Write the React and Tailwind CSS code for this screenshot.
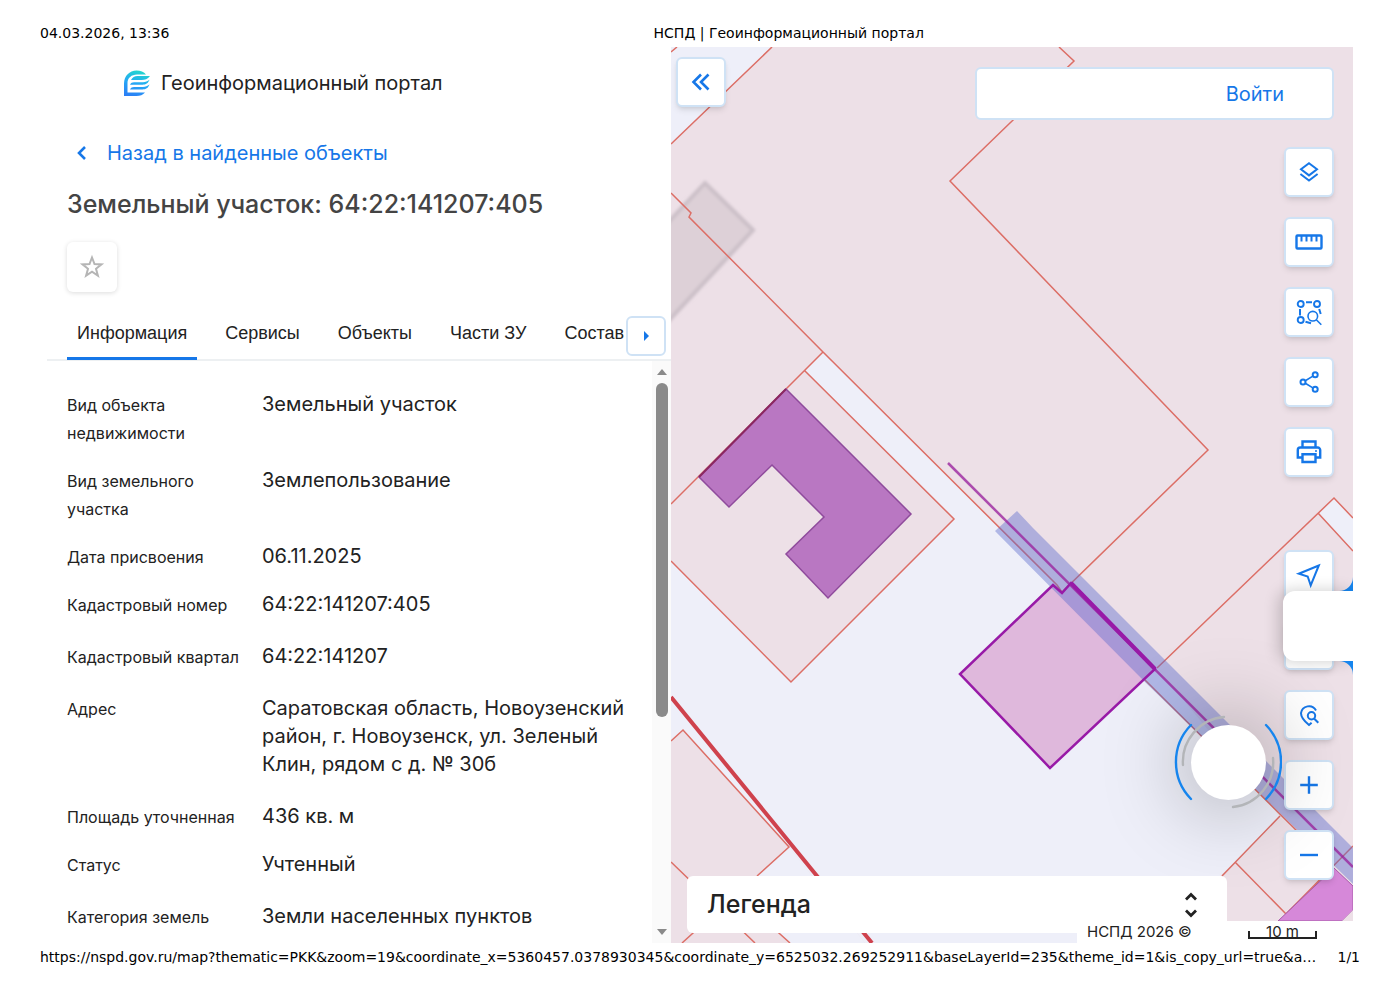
import React, { useState } from 'react';

const tabs = ['Информация', 'Сервисы', 'Объекты', 'Части ЗУ', 'Состав'];

const details = [
  { label: 'Вид объекта недвижимости', value: 'Земельный участок' },
  { label: 'Вид земельного участка', value: 'Землепользование' },
  { label: 'Дата присвоения', value: '06.11.2025' },
  { label: 'Кадастровый номер', value: '64:22:141207:405', wide: true },
  { label: 'Кадастровый квартал', value: '64:22:141207', wide: true },
  {
    label: 'Адрес',
    value: 'Саратовская область, Новоузенский район, г. Новоузенск, ул. Зеленый Клин, рядом с д. № 30б',
    wide: true,
  },
  { label: 'Площадь уточненная', value: '436 кв. м' },
  { label: 'Статус', value: 'Учтенный', wide: true },
  { label: 'Категория земель', value: 'Земли населенных пунктов' },
];

const Icon = ({ children, className = 'size-7' }) => (
  <svg
    className={className}
    viewBox="0 0 28 28"
    fill="none"
    stroke="currentColor"
    strokeWidth={2}
    aria-hidden="true"
  >
    {children}
  </svg>
);

const LayersIcon = () => (
  <Icon>
    <path d="M14 5.2 22 11.3 14 17.4 6 11.3Z" />
    <path d="M5.4 16 14 22.6 22.6 16" />
  </Icon>
);

const RulerIcon = () => (
  <Icon>
    <rect x="1.5" y="7.5" width="25" height="13" rx="1" strokeWidth={2.4} />
    <path d="M6.5 8v5.5M11.5 8v5.5M16.5 8v5.5M21.5 8v5.5" />
  </Icon>
);

const AreaSearchIcon = () => (
  <Icon>
    <circle cx="5.7" cy="6" r="3" strokeWidth={1.9} />
    <circle cx="22" cy="6" r="3" strokeWidth={1.9} />
    <circle cx="5.7" cy="22" r="3" strokeWidth={1.9} />
    <path d="M11 4.2h6M5 11v6.5M24.2 11l1.5 5M10.5 23.8l5.5 1.5" />
    <circle cx="17.8" cy="18.2" r="4.8" strokeWidth={1.6} />
    <path d="m21.3 21.8 5 5" strokeWidth={1.6} />
  </Icon>
);

const ShareIcon = () => (
  <Icon>
    <circle cx="8" cy="14" r="2.5" />
    <circle cx="20.2" cy="6.7" r="2.5" />
    <circle cx="20.2" cy="21.3" r="2.5" />
    <path d="m10.3 12.7 7.6-4.6M10.3 15.3l7.6 4.6" strokeWidth={1.6} />
  </Icon>
);

const PrintIcon = () => (
  <Icon>
    <path d="M7.5 9.5v-6h13v6" strokeWidth={2.4} />
    <path d="M7 19.5H2.8V12a2.5 2.5 0 0 1 2.5-2.5h17.4a2.5 2.5 0 0 1 2.5 2.5v7.5H21" strokeWidth={2.4} />
    <path d="M7.5 16.2h13V24h-13Z" strokeWidth={2.4} />
    <circle cx="21" cy="13" r="1" fill="currentColor" stroke="none" />
  </Icon>
);

const LocateIcon = () => (
  <Icon>
    <path d="M23.8 4.5 3.8 12.7l8.9 2.8 3 8.8Z" />
  </Icon>
);

const PlaceSearchIcon = () => (
  <Icon>
    <path d="M21 9.5A8 8 0 0 0 6 12.2c0 5 4 8.5 8 11.8l2.6-2.3" />
    <circle cx="16.5" cy="14.8" r="3.7" />
    <path d="m19.3 17.7 4 4" />
  </Icon>
);

const PlusIcon = () => (
  <Icon>
    <path d="M14 5.2v17.6M5.2 14h17.6" strokeWidth={2.4} />
  </Icon>
);

const MinusIcon = () => (
  <Icon>
    <path d="M5 14h18" strokeWidth={2.4} />
  </Icon>
);

const Logo = () => (
  <svg className="size-7" viewBox="0 0 28 28" fill="none" aria-hidden="true">
    <defs>
      <linearGradient id="logo" x1="16" y1="0" x2="8" y2="28" gradientUnits="userSpaceOnUse">
        <stop offset="0" stopColor="#22dcc8" />
        <stop offset="0.5" stopColor="#25a8f5" />
        <stop offset="1" stopColor="#2b7df5" />
      </linearGradient>
    </defs>
    <path
      fill="url(#logo)"
      d="M1 27V14.5C1 7 6.5 1.5 13.5 1.5c4 0 7.500 1.500 9.500 4H14C8.500 5.500 4.500 9 4.500 14v9.500H22C20 26 17 27 13.500 27Z"
    />
    <path
      fill="url(#logo)"
      d="M8 11c1.500-2.500 3.500-4 6.500-4h12.500C24.500 10 22 11 18.500 11ZM7 15.700c1-1.700 2-2.400 4-2.400h9c2.500 0 4.500-1 6.500-2.500-1.500 3.700-3.500 4.900-7 4.900ZM7 20.400c1-1.700 2-2.400 4-2.400h9c2.500 0 4.500-1 6.500-2.500-1.500 3.700-3.500 4.900-7 4.900Z"
    />
  </svg>
);

const MapButton = ({ label, children }) => (
  <button
    type="button"
    aria-label={label}
    className="flex size-[50px] items-center justify-center rounded-md border-2 border-[#cfe2f5] bg-white text-[#1677e8] shadow-md"
  >
    {children}
  </button>
);

const ParcelMap = () => (
  <svg
    className="absolute inset-0 h-full w-full"
    viewBox="671 47 682 896"
    preserveAspectRatio="xMidYMid slice"
    aria-hidden="true"
  >
    <defs>
      <filter id="soft" x="-10%" y="-10%" width="120%" height="120%">
        <feGaussianBlur stdDeviation="1.5" />
      </filter>
    </defs>
    <rect x="671" y="47" width="682" height="896" fill="#ede0e7" />

    {/* land between the parcels */}
    <g fill="#eeeff9">
      <path d="M671 47H772L671 144Z" />
      <path d="M823 352 1057 585 1157 668 1280 817 1200 896V943H865L671 697V561L791 682 954 519 805 371Z" />
      <path d="M1334 498 1353 518V551L1318 513Z" />
    </g>

    {/* building */}
    <path
      d="M660 231 705 183 753 230 660 330Z"
      fill="#ddd0d7"
      stroke="#cbbfc7"
      strokeWidth="4"
      filter="url(#soft)"
    />

    {/* lower left parcels */}
    <path d="M671 697 865 943H671Z" fill="#eeeff9" />
    <path d="M671 741 683 730 789 847 757 876 686 943H671Z" fill="#ede0e7" />
    <path d="M686 943 735 895 790 943Z" fill="#ede0e7" />

    <g fill="none" stroke="#dc6e66" strokeWidth="1.5">
      <path d="M671 52 677 47M772 47 671 144" />
      <path d="M671 193 691 213 689 217 823 352 1057 585 1062 592 1208 450 950 181 1074 61 1059 47" />
      <path d="M823 352 671 504M805 371 954 519 791 682 671 561" />
      <path d="M1157 668 1334 498 1353 518M1318 513 1353 551" />
      <path d="M671 741 683 730 789 847 757 876M671 862 755 943M735 895 682 943M770 925 790 943" />
      <path d="M1145 680 1298 832M1280 816 1222 876M1235 862 1286 914M1286 914 1353 846" />
    </g>
    <path d="M671 697 817 876 872 943" fill="none" stroke="#cf424d" strokeWidth="4" />

    {/* neighbouring buildings */}
    <path
      d="M786 389 911 514 828 598 786 554 824 517 772 465 729 507 699 477Z"
      fill="#b977c2"
      stroke="#8f4b9c"
      strokeWidth="1.5"
    />
    <path d="M699 477 786 389" stroke="#8b2860" strokeWidth="2" />
    <path d="M1278 921 1334 868 1353 886V910L1342 921Z" fill="#d688d9" stroke="#a85aa8" strokeWidth="1" />
    <path d="M1342 921 1353 910V921Z" fill="#ede0e7" />

    {/* selected parcel */}
    <path d="M1053 585 1062 593 1071 583 1155 669 1050 768 960 674Z" fill="#dfb8dc" />
    <path d="M995 531 1017 511 1033 528 1353 848V884L1145 682Z" fill="#5b69cd" fillOpacity="0.42" />
    <path d="M948 463 1353 867" stroke="#9b259f" strokeOpacity="0.8" strokeWidth="2.5" />
    <path
      d="M1053 585 1062 593 1071 583 1155 669 1050 768 960 674Z"
      fill="none"
      stroke="#981aa7"
      strokeWidth="2.5"
    />
    <path d="M1071 583 1155 669" stroke="#981aa7" strokeWidth="4" />
  </svg>
);

const Loader = () => (
  <div className="absolute right-[71px] bottom-[127px] flex size-[108px] items-center justify-center">
    <div className="size-[75px] rounded-full bg-white shadow-[0_0_80px_12px_rgba(0,0,0,0.26)]" />
    <svg className="absolute inset-0" viewBox="1174 708 108 108" fill="none" strokeLinecap="round" aria-hidden="true">
      <g stroke="#b3b5b8" strokeWidth="2.4">
        <path d="M1183 765A45 45 0 0 1 1224 717" />
        <path d="M1273 758A45 45 0 0 1 1233 807" />
      </g>
      <g stroke="#1685ee" strokeWidth="2.4">
        <path d="M1191 725A53 53 0 0 0 1191 799" />
        <path d="M1266 725A53 53 0 0 1 1266 799" />
      </g>
    </svg>
  </div>
);

const DetailsPanel = () => {
  const [active, setActive] = useState(tabs[0]);

  return (
    <section className="flex w-[624px] shrink-0 flex-col">
      <div className="flex h-[72px] items-center gap-[10px] pl-[76px]">
        <Logo />
        <span className="text-xl text-[#222]">Геоинформационный портал</span>
      </div>

      <a href="#results" className="mt-4 ml-5 flex h-9 items-center gap-4 text-xl text-[#1677e8]">
        <Icon className="size-6">
          <path d="m21 7-7 7 7 7" strokeWidth={3} />
        </Icon>
        Назад в найденные объекты
      </a>

      <h1 className="mt-[15px] ml-5 text-[25px] leading-9 font-medium text-[#444]">
        Земельный участок: 64:22:141207:405
      </h1>

      <button
        type="button"
        aria-label="В избранное"
        className="mt-5 ml-5 flex size-[50px] items-center justify-center rounded-md bg-white text-[#b5b5b5] shadow-[0_1px_5px_rgba(0,0,0,0.14)]"
      >
        <Icon>
          <path d="m14 4.5 2.5 6.6 7 .3-5.5 4.4 1.9 6.8-5.9-3.9-5.9 3.9L10 15.8 4.5 11.4l7-.3Z" />
        </Icon>
      </button>

      <div className="mt-4 flex h-[53px] border-b-2 border-[#edf0f2] pl-5">
        <div role="tablist" className="-mb-px flex min-w-0 flex-1 gap-[18px]">
          {tabs.map((tab) => (
            <button
              key={tab}
              type="button"
              role="tab"
              aria-selected={tab === active}
              onClick={() => setActive(tab)}
              className={`border-b-[3px] px-[10px] pt-px font-['Liberation_Sans',sans-serif] text-lg whitespace-nowrap text-[#222] ${
                tab === active ? 'border-[#1677e8]' : 'border-transparent'
              }`}
            >
              {tab}
            </button>
          ))}
        </div>
        <button
          type="button"
          aria-label="Следующие вкладки"
          className="relative mt-2 mr-[5px] flex size-10 items-center justify-center rounded-md border-2 border-[#cfe2f5] bg-white text-[#1677e8]"
        >
          <svg className="h-3 w-2" viewBox="0 0 8 12" fill="currentColor" aria-hidden="true">
            <path d="M2 1v10l5-5Z" />
          </svg>
        </button>
      </div>

      <div className="flex flex-1">
        <dl className="flex-1 pt-[29px] pl-5 text-[#222]">
          {details.map(({ label, value, wide }) => (
            <div
              key={label}
              className={`grid grid-cols-[175px_1fr] gap-5 last:pb-0 ${wide ? 'pb-6' : 'pb-5'}`}
            >
              <dt className="-mb-px pt-px text-base leading-7">{label}</dt>
              <dd className="text-xl leading-7">{value}</dd>
            </div>
          ))}
        </dl>
        <div className="flex w-[19px] flex-col items-center bg-[#fafafa] py-2 text-[#8a8a8a]" aria-hidden="true">
          <svg className="h-[6px] w-[10px]" viewBox="0 0 10 6" fill="currentColor">
            <path d="m5 0 5 6H0Z" />
          </svg>
          <div className="my-2 flex-1">
            <div className="h-[62%] w-3 rounded-full bg-[#8a8a8a]" />
          </div>
          <svg className="h-[6px] w-[10px]" viewBox="0 0 10 6" fill="currentColor">
            <path d="m5 6 5-6H0Z" />
          </svg>
        </div>
      </div>
    </section>
  );
};

const MapPanel = () => (
  <section className="relative flex-1 overflow-hidden">
    <ParcelMap />

    <div className="absolute top-[10px] left-[5px]">
      <MapButton label="Свернуть панель">
        <Icon>
          <path d="m14 6.5-7.5 7.5 7.5 7.5M21.5 6.5 14 14l7.5 7.5" strokeWidth={2.6} />
        </Icon>
      </MapButton>
    </div>

    <div className="absolute top-5 right-[19px] flex h-[53px] w-[359px] items-center justify-end rounded-md border-2 border-[#cfe2f5] bg-white pr-12">
      <button type="button" className="text-xl text-[#1677e8]">Войти</button>
    </div>

    <div className="absolute top-[100px] right-[19px] flex flex-col gap-5">
      <MapButton label="Слои"><LayersIcon /></MapButton>
      <MapButton label="Измерения"><RulerIcon /></MapButton>
      <MapButton label="Поиск по области"><AreaSearchIcon /></MapButton>
      <MapButton label="Поделиться"><ShareIcon /></MapButton>
      <MapButton label="Печать"><PrintIcon /></MapButton>
    </div>

    <div className="absolute right-[19px] bottom-[63px] flex flex-col gap-5">
      <MapButton label="Моё местоположение"><LocateIcon /></MapButton>
      <MapButton label="Обзор" />
      <MapButton label="Найти место"><PlaceSearchIcon /></MapButton>
      <MapButton label="Приблизить"><PlusIcon /></MapButton>
      <MapButton label="Отдалить"><MinusIcon /></MapButton>
    </div>

    <Loader />

    {/* side drawer handle */}
    <div className="absolute right-0 bottom-[268px] flex flex-col items-end text-[#1685ee]">
      <svg className="size-[14px]" viewBox="0 0 14 14" fill="currentColor" aria-hidden="true">
        <path d="M0 14A14 14 0 0 0 14 0V14Z" />
      </svg>
      <div className="h-[70px] w-[70px] rounded-l-xl bg-white shadow-[-4px_0_16px_rgba(0,0,0,0.2)]" />
      <svg className="size-[14px]" viewBox="0 0 14 14" fill="currentColor" aria-hidden="true">
        <path d="M0 0A14 14 0 0 1 14 14V0Z" />
      </svg>
    </div>

    <button
      type="button"
      className="absolute right-[126px] bottom-[10px] left-4 flex h-[57px] items-center justify-between rounded-md bg-white pr-[22px] pl-5 text-[25px] font-medium text-[#222]"
    >
      Легенда
      <Icon>
        <path d="m9 8.5 5-5 5 5M9 19.5l5 5 5-5" strokeWidth={2.8} />
      </Icon>
    </button>

    <div className="absolute right-0 bottom-0 flex h-[22px] w-[276px] items-center justify-between bg-white pr-9 pl-[10px] text-[15px] leading-5 text-[#222]">
      <span>НСПД 2026 ©</span>
      <div className="relative w-[69px] text-center">
        10 m
        <div className="absolute inset-x-0 bottom-[3px] h-2 border-2 border-t-0 border-[#222]" />
      </div>
    </div>
  </section>
);

const App = () => (
  <div className="flex min-h-screen flex-col bg-white font-['Inter',sans-serif]">
    <header className="flex h-[47px] items-end px-10 pb-[3px] font-['DejaVu_Sans',sans-serif] text-[14px] text-black">
      <span>04.03.2026, 13:36</span>
      <span className="ml-12 flex-1 text-center">НСПД | Геоинформационный портал</span>
    </header>

    <main className="mx-[47px] flex flex-1">
      <DetailsPanel />
      <MapPanel />
    </main>

    <footer className="flex h-[46px] justify-between gap-1 px-10 pt-1 font-['DejaVu_Sans',sans-serif] text-[14px] text-black">
      <span className="truncate">
        https://nspd.gov.ru/map?thematic=PKK&zoom=19&coordinate_x=5360457.0378930345&coordinate_y=6525032.269252911&baseLayerId=235&theme_id=1&is_copy_url=true&a…
      </span>
      <span>1/1</span>
    </footer>
  </div>
);

export default App;
